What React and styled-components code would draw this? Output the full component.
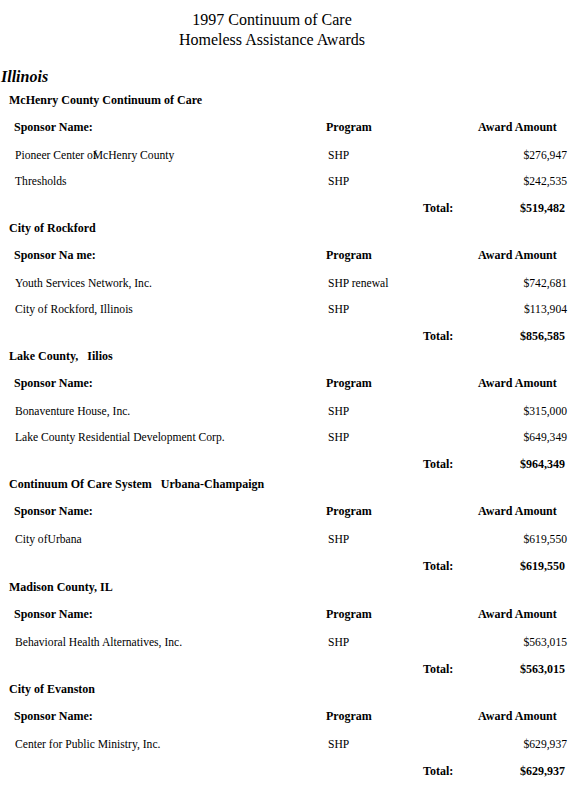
import React from "react";
import styled, { createGlobalStyle } from "styled-components";

const SERIF = `"Liberation Serif", "Times New Roman", Times, serif`;

const GlobalStyle = createGlobalStyle`
  html, body {
    margin: 0;
    padding: 0;
    background: #ffffff;
  }
  body {
    font-family: ${SERIF};
    color: #000000;
  }
`;

const Page = styled.div`
  width: 576px;
  padding-top: 10px;
  font-family: ${SERIF};
  color: #000;
`;

const Title = styled.div`
  width: 544px;
  text-align: center;
  font-family: ${SERIF};
  font-size: 16px;
  font-weight: normal;
  line-height: 20px;
`;

const State = styled.div`
  margin: 17px 0 0 1px;
  font-family: ${SERIF};
  font-size: 16px;
  font-weight: bold;
  font-style: italic;
  line-height: 20px;
`;

const SectionList = styled.div`
  margin-top: 3px;
  display: flex;
  flex-direction: column;
`;

const Section = styled.section`
  display: flex;
  flex-direction: column;
  & + & {
    margin-top: 0.5px;
  }
`;

const SectionTitle = styled.div`
  margin: 0 0 7px 9px;
  font-family: ${SERIF};
  font-size: 12px;
  font-weight: bold;
  line-height: 20px;
  white-space: pre;
`;

const Row = styled.div`
  display: grid;
  grid-template-columns: 312px 97px 55px 89px;
  padding-left: 14px;
  font-family: ${SERIF};
  line-height: 20px;
  white-space: pre;
`;

const HeaderRow = styled(Row)`
  font-size: 12px;
  font-weight: bold;
  margin-bottom: 9px;
`;

const DataRow = styled(Row)`
  font-size: 11.6px;
  & + & {
    margin-top: 5.5px;
  }
`;

const TotalRow = styled(Row)`
  font-size: 12px;
  font-weight: bold;
  margin-top: 6px;
`;

const Cell = styled.div`
  grid-column: ${(p) => p.$col};
  text-align: ${(p) => p.$align || "left"};
  padding-left: ${(p) => p.$indent || 0}px;
  padding-right: ${(p) => p.$inset || 0}px;
`;

const Hidden = styled.span`
  margin-right: -4px;
`;

const sections = [
  {
    name: "McHenry County Continuum of Care",
    label: "Sponsor Name:",
    rows: [
      {
        sponsor: (
          <>
            Pioneer Center o<Hidden>f</Hidden>McHenry County
          </>
        ),
        program: "SHP",
        amount: "$276,947",
      },
      { sponsor: "Thresholds", program: "SHP", amount: "$242,535" },
    ],
    total: "$519,482",
  },
  {
    name: "City of Rockford",
    label: "Sponsor Na me:",
    rows: [
      { sponsor: "Youth Services Network, Inc.", program: "SHP renewal", amount: "$742,681" },
      { sponsor: "City of Rockford, Illinois", program: "SHP", amount: "$113,904" },
    ],
    total: "$856,585",
  },
  {
    name: "Lake County,   Iilios",
    label: "Sponsor Name:",
    rows: [
      { sponsor: "Bonaventure House, Inc.", program: "SHP", amount: "$315,000" },
      { sponsor: "Lake County Residential Development Corp.", program: "SHP", amount: "$649,349" },
    ],
    total: "$964,349",
  },
  {
    name: "Continuum Of Care System   Urbana-Champaign",
    label: "Sponsor Name:",
    rows: [{ sponsor: "City ofUrbana", program: "SHP", amount: "$619,550" }],
    total: "$619,550",
  },
  {
    name: "Madison County, IL",
    label: "Sponsor Name:",
    rows: [{ sponsor: "Behavioral Health Alternatives, Inc.", program: "SHP", amount: "$563,015" }],
    total: "$563,015",
  },
  {
    name: "City of Evanston",
    label: "Sponsor Name:",
    rows: [{ sponsor: "Center for Public Ministry, Inc.", program: "SHP", amount: "$629,937" }],
    total: "$629,937",
  },
];

export default function App() {
  return (
    <>
      <GlobalStyle />
      <Page>
        <Title>
          1997 Continuum of Care
          <br />
          Homeless Assistance Awards
        </Title>
        <State>Illinois</State>
        <SectionList>
          {sections.map((s, i) => (
            <Section key={i}>
              <SectionTitle>{s.name}</SectionTitle>
              <HeaderRow>
                <Cell $col="1">{s.label}</Cell>
                <Cell $col="2 / 4">Program</Cell>
                <Cell $col="4">Award Amount</Cell>
              </HeaderRow>
              {s.rows.map((r, j) => (
                <DataRow key={j}>
                  <Cell $col="1" $indent={1}>{r.sponsor}</Cell>
                  <Cell $col="2 / 4" $indent={2}>{r.program}</Cell>
                  <Cell $col="4" $align="right">{r.amount}</Cell>
                </DataRow>
              ))}
              <TotalRow>
                <Cell $col="3">Total:</Cell>
                <Cell $col="4" $align="right" $inset={2}>{s.total}</Cell>
              </TotalRow>
            </Section>
          ))}
        </SectionList>
      </Page>
    </>
  );
}
